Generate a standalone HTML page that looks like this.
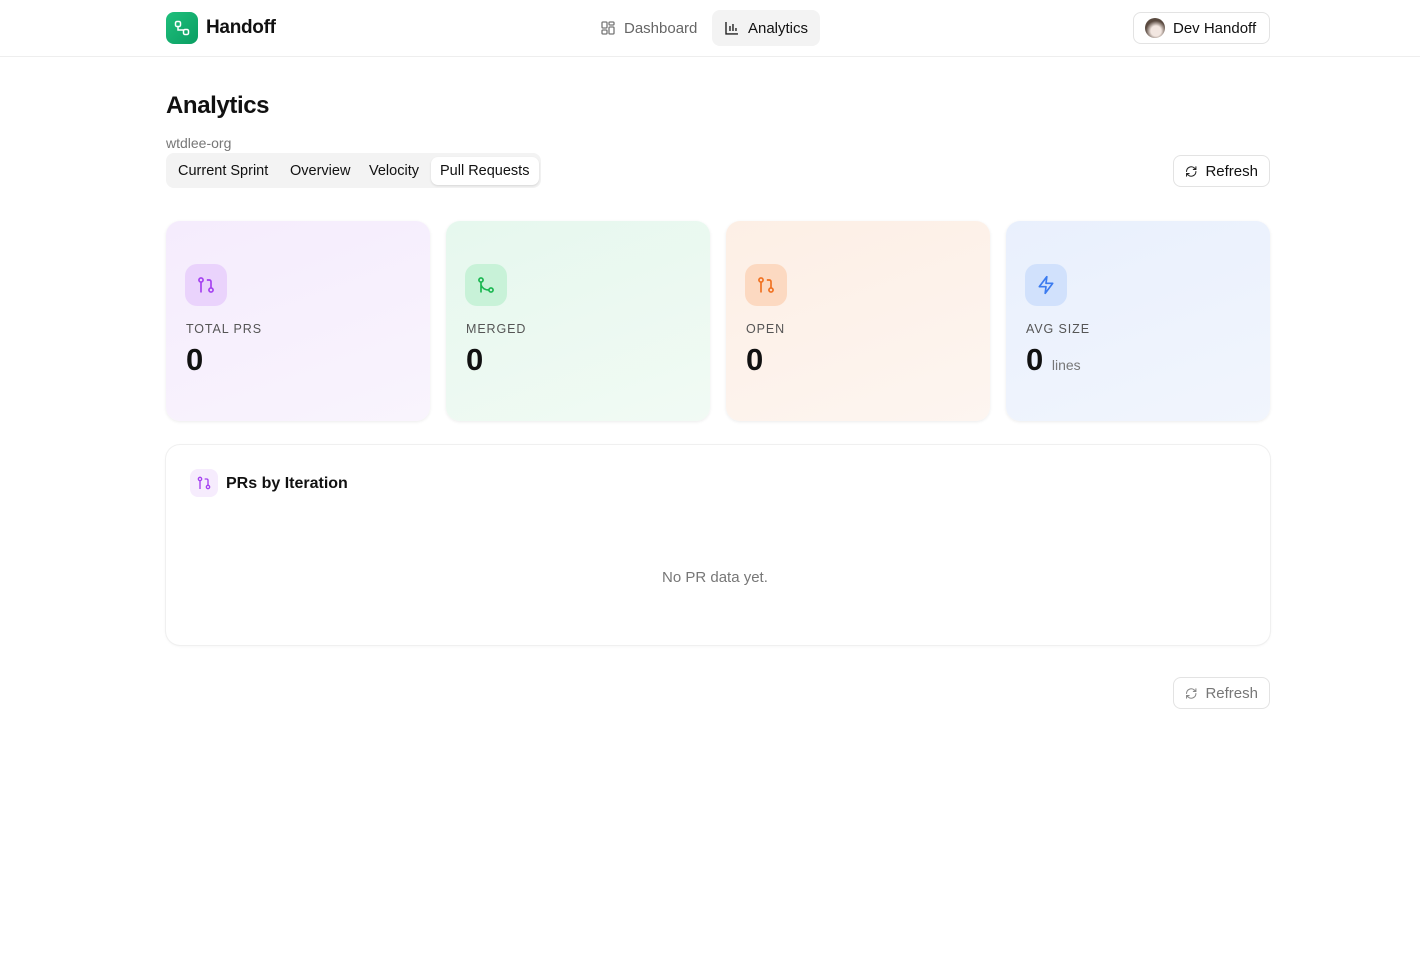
<!DOCTYPE html>
<html><head><meta charset="utf-8"><style>
*{box-sizing:border-box;margin:0;padding:0}
body{width:1420px;height:954px;background:#fff;font-family:"Liberation Sans",sans-serif;color:#111;position:relative;overflow:hidden}
.hdr{position:absolute;left:0;top:0;width:1420px;height:57px;border-bottom:1px solid #eee}
.abs{position:absolute}
.logo{left:166px;top:12px;width:32px;height:32px;border-radius:8px;background:linear-gradient(135deg,#1fbf7c,#0a9e62);display:flex;align-items:center;justify-content:center}
.brand{left:206px;top:17px;font-size:19px;font-weight:600;letter-spacing:-.3px}
.nav{top:10px;height:36px;border-radius:8px;display:flex;align-items:center;gap:8px;font-size:15px;padding:0 12px}
.btn{border:1px solid #e3e3e3;border-radius:8px;display:flex;align-items:center;gap:8px;font-size:15px;padding:0 11px;background:#fff}
.card{top:221px;width:264px;height:200px;border-radius:14px;box-shadow:0 1px 3px rgba(0,0,0,.08)}
.ib{position:absolute;left:19px;top:43px;width:42px;height:42px;border-radius:12px;display:flex;align-items:center;justify-content:center}
.lbl{position:absolute;left:20px;top:101px;font-size:12.5px;letter-spacing:.9px;color:#555}
.num{position:absolute;left:20px;top:121px;font-size:31px;font-weight:700}
</style></head><body>
<div class="hdr"></div>
<div class="abs logo"><svg width="18" height="18" viewBox="0 0 18 18" fill="none" stroke="#fff" stroke-width="1.5"><rect x="2.5" y="2.5" width="5" height="5" rx="1.5"/><rect x="10.5" y="10.5" width="5" height="5" rx="1.5"/><path d="M5 7.5v3.5h5.5"/></svg></div>
<div class="abs brand">Handoff</div>
<div class="abs nav" style="left:588px;color:#666"><svg width="16" height="16" viewBox="0 0 16 16" fill="none" stroke="#777" stroke-width="1.3"><rect x="2" y="2" width="5" height="6" rx="1"/><rect x="9" y="2" width="5" height="3" rx="1"/><rect x="9" y="7" width="5" height="7" rx="1"/><rect x="2" y="10" width="5" height="4" rx="1"/></svg>Dashboard</div>
<div class="abs nav" style="left:712px;width:108px;background:#f3f3f3"><svg width="16" height="16" viewBox="0 0 16 16" fill="none" stroke="#222" stroke-width="1.4"><path d="M2 2v12h12M6 11V6M9 11V4M12 11V8"/></svg>Analytics</div>
<div class="abs btn" style="left:1133px;top:12px;height:32px;width:137px"><div style="width:20px;height:20px;border-radius:50%;background:radial-gradient(circle at 55% 65%,#f2e6e0 30%,#5a4a40 60%)"></div>Dev Handoff</div>
<div class="abs" style="left:166px;top:92px;font-size:24px;font-weight:600;letter-spacing:-.4px">Analytics</div>
<div class="abs" style="left:166px;top:135px;font-size:14px;color:#777">wtdlee-org</div>
<div class="abs" style="left:166px;top:153px;width:375px;height:35px;background:#f3f3f3;border-radius:8px"></div>
<div class="abs" style="left:431px;top:157px;width:108px;height:28px;background:#fff;border-radius:7px;box-shadow:0 1px 2px rgba(0,0,0,.12)"></div>
<div class="abs" style="left:178px;top:163px;font-size:14.5px">Current Sprint</div>
<div class="abs" style="left:290px;top:163px;font-size:14.5px">Overview</div>
<div class="abs" style="left:369px;top:163px;font-size:14.5px">Velocity</div>
<div class="abs" style="left:440px;top:163px;font-size:14.5px">Pull Requests</div>
<div class="abs btn" style="left:1173px;top:155px;height:32px;width:97px"><svg width="17" height="17" viewBox="0 0 24 24" fill="none" stroke="#222" stroke-width="2" stroke-linecap="round"><path d="M3 12a9 9 0 0 1 15-6.7L21 8M21 3v5h-5M21 12a9 9 0 0 1-15 6.7L3 16M3 21v-5h5"/></svg>Refresh</div>

<div class="abs card" style="left:166px;background:linear-gradient(160deg,#f5ecfd,#f9f4fd)"><div class="ib" style="background:#ead3fc"><svg width="20" height="20" viewBox="0 0 24 24" fill="none" stroke="#a43ff0" stroke-width="2"><circle cx="6" cy="6" r="2.5"/><circle cx="18" cy="18" r="2.5"/><path d="M6 8.5V21M13 6h3a2 2 0 0 1 2 2v7.5"/></svg></div><div class="lbl">TOTAL PRS</div><div class="num">0</div></div>
<div class="abs card" style="left:446px;background:linear-gradient(160deg,#e6f8ee,#f1faf4)"><div class="ib" style="background:#c8f2d8"><svg width="20" height="20" viewBox="0 0 24 24" fill="none" stroke="#18b64f" stroke-width="2"><circle cx="6" cy="6" r="2.5"/><circle cx="18" cy="18" r="2.5"/><path d="M6 8.5V21M6 12c2 5 6 6 9.5 6"/></svg></div><div class="lbl">MERGED</div><div class="num">0</div></div>
<div class="abs card" style="left:726px;background:linear-gradient(160deg,#fdefe5,#fdf5f0)"><div class="ib" style="background:#fcd9c1"><svg width="20" height="20" viewBox="0 0 24 24" fill="none" stroke="#f0701f" stroke-width="2"><circle cx="6" cy="6" r="2.5"/><circle cx="18" cy="18" r="2.5"/><path d="M6 8.5V21M13 6h3a2 2 0 0 1 2 2v7.5"/></svg></div><div class="lbl">OPEN</div><div class="num">0</div></div>
<div class="abs card" style="left:1006px;background:linear-gradient(160deg,#e9f0fd,#f1f5fd)"><div class="ib" style="background:#d1e1fc"><svg width="20" height="20" viewBox="0 0 24 24" fill="none" stroke="#3b7bf0" stroke-width="2" stroke-linejoin="round"><path d="M13 2L4 14h8l-1 8 9-12h-8z"/></svg></div><div class="lbl">AVG SIZE</div><div class="num">0 <span style="font-size:14px;font-weight:400;color:#777">lines</span></div></div>

<div class="abs" style="left:166px;top:445px;width:1104px;height:200px;border-radius:14px;box-shadow:0 0 0 1px #f0f0f0,0 1px 3px rgba(0,0,0,.06)"></div>
<div class="abs" style="left:190px;top:469px;width:28px;height:28px;border-radius:8px;background:#f6ecfd;display:flex;align-items:center;justify-content:center"><svg width="16" height="16" viewBox="0 0 24 24" fill="none" stroke="#a43ff0" stroke-width="2"><circle cx="6" cy="6" r="2.5"/><circle cx="18" cy="18" r="2.5"/><path d="M6 8.5V21M13 6h3a2 2 0 0 1 2 2v7.5"/></svg></div>
<div class="abs" style="left:226px;top:475px;font-size:16px;font-weight:600">PRs by Iteration</div>
<div class="abs" style="left:662px;top:569px;font-size:15px;color:#777">No PR data yet.</div>
<div class="abs btn" style="left:1173px;top:677px;height:32px;width:97px;color:#777"><svg width="17" height="17" viewBox="0 0 24 24" fill="none" stroke="#888" stroke-width="2" stroke-linecap="round"><path d="M3 12a9 9 0 0 1 15-6.7L21 8M21 3v5h-5M21 12a9 9 0 0 1-15 6.7L3 16M3 21v-5h5"/></svg>Refresh</div>
</body></html>
